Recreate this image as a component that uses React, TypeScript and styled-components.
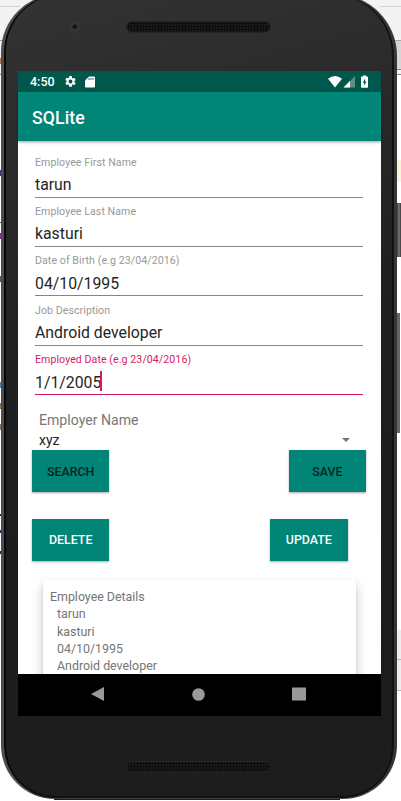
import React from 'react';
import styled, { createGlobalStyle } from 'styled-components';

const GlobalStyle = createGlobalStyle`
  * { box-sizing: border-box; }
  body { margin: 0; background: #fff; font-family: Roboto, sans-serif; overflow: hidden; }
`;

const Desktop = styled.div`
  position: relative;
  width: 401px;
  height: 801px;
  overflow: hidden;
  padding-left: 1px;
  background: linear-gradient(#f3f3f3, #f3f3f3) 0 0 / 401px 74px no-repeat, #fff;
`;

/* Sliver of desktop windows that shows past the edges of the device. */
const Mark = styled.span<{ $x: number; $y: number; $w: number; $h: number; $c: string }>`
  position: absolute;
  left: ${(p) => p.$x}px;
  top: ${(p) => p.$y}px;
  width: ${(p) => p.$w}px;
  height: ${(p) => p.$h}px;
  background: ${(p) => p.$c};
`;

const Phone = styled.div`
  position: relative;
  width: 396px;
  height: 805px;
  margin-top: -6px;
  padding: 0 12px 0 13px;
  display: flex;
  flex-direction: column;
  border-radius: 58px 62px 54px 54px;
  background: linear-gradient(165deg, #333 0%, #2a2a2a 20%, #1e1e1e 48%, #1c1c1c 100%);
  border: 1px solid #444;
  border-left: 3px solid #4b4d4e;
  border-right: 3px solid #363636;
  box-shadow: inset 2px 0 0 #080808, inset -2px 0 0 #111, inset 0 -2px 0 #101010;
`;

const Bezel = styled.div<{ $h: number; $pad: number }>`
  position: relative;
  height: ${(p) => p.$h}px;
  padding-top: ${(p) => p.$pad}px;
  display: flex;
  justify-content: center;
  flex: none;
`;

const Speaker = styled.div`
  width: 145px;
  height: 12px;
  margin-left: -2px;
  border-radius: 6px;
  border: 1px solid #252525;
  background: radial-gradient(circle, #090909 0.8px, #1a1a1a 1.3px) 0 0 / 3px 3px;
`;

const Camera = styled.span`
  position: absolute;
  left: 51px;
  top: 26px;
  width: 12px;
  height: 12px;
  border-radius: 50%;
  border: 1px solid #353637;
  background: radial-gradient(circle at 58% 48%, #161616 0 2px, #3a3c3f 3px, #303030 5px);
`;

const Screen = styled.main`
  width: 363px;
  height: 645px;
  margin-left: 1px;
  flex: none;
  display: flex;
  flex-direction: column;
  background: #fff;
`;

const StatusBar = styled.div`
  height: 21px;
  flex: none;
  display: flex;
  align-items: center;
  padding: 0 12px;
  background: #00574b;
  color: #fff;
`;

const Clock = styled.span`
  width: 34px;
  font-size: 12.5px;
  font-weight: 500;
  line-height: 21px;
`;

const StatusGroup = styled.div<{ $right?: boolean }>`
  display: flex;
  align-items: center;
  gap: 8px;
  margin-left: ${(p) => (p.$right ? 'auto' : '0')};
`;

const AppBar = styled.header`
  height: 49px;
  flex: none;
  padding: 2px 14px 0;
  display: flex;
  align-items: center;
  background: #008577;
  color: #fff;
  font-size: 17.6px;
  font-weight: 500;
  letter-spacing: 0.15px;
  z-index: 1;
  box-shadow: 0 1px 3px rgba(0, 0, 0, 0.4);
`;

const Content = styled.div`
  height: 532.5px;
  flex: none;
  overflow: hidden;
  padding: 9px 14px 0;
`;

const Form = styled.form`
  padding: 0 4px 0 3px;
`;

const Field = styled.label<{ $active?: boolean }>`
  display: flex;
  flex-direction: column;
  height: 49.4px;
  padding-top: 5.6px;
  color: ${(p) => (p.$active ? '#d81b60' : '#999')};
`;

const FieldLabel = styled.span`
  font-size: 10.6px;
  line-height: 13px;
  letter-spacing: 0.07px;
`;

const FieldValue = styled.span<{ $active?: boolean }>`
  display: flex;
  align-items: center;
  height: 29px;
  padding-top: 4px;
  font-size: 15.8px;
  color: #252525;
  border-bottom: ${(p) => (p.$active ? '1.5px solid #d81b60' : '1px solid #858585')};
`;

const Caret = styled.i`
  width: 1.5px;
  height: 20px;
  margin: -3px 0 0 -1px;
  background: #d81b60;
`;

const Employer = styled.section`
  height: 53px;
  padding: 14px 17.5px 0 7px;
`;

const EmployerTitle = styled.div`
  height: 20px;
  line-height: 18px;
  font-size: 14.1px;
  color: #777;
`;

const Select = styled.div`
  display: flex;
  justify-content: space-between;
  align-items: center;
  height: 18px;
  line-height: 18px;
  font-size: 14px;
  color: #222;
`;

const Arrow = styled.i`
  border-left: 4.5px solid transparent;
  border-right: 4.5px solid transparent;
  border-top: 4.5px solid #777;
`;

const ButtonRow = styled.div<{ $inset?: number }>`
  height: 68.6px;
  display: flex;
  justify-content: space-between;
  padding-right: ${(p) => p.$inset ?? 0}px;
`;

const Button = styled.button<{ $light?: boolean }>`
  width: 77.4px;
  height: 42.3px;
  padding: 0;
  border: 0;
  background: #008577;
  color: ${(p) => (p.$light ? '#fff' : '#0b241f')};
  font: 500 12.4px Roboto, sans-serif;
  box-shadow: 0 1px 2px rgba(0, 0, 0, 0.35);
`;

const Card = styled.section`
  width: 313.5px;
  height: 180px;
  margin: -7.2px 0 0 10.5px;
  padding: 8.4px 7.5px;
  background: #fff;
  color: #757575;
  font-size: 12.4px;
  line-height: 17.1px;
  box-shadow: 0 6px 10px rgba(0, 0, 0, 0.24), 0 1px 2px rgba(0, 0, 0, 0.08);
`;

const Detail = styled.div`
  padding-left: 7px;
`;

const NavBar = styled.nav`
  height: 42.5px;
  flex: none;
  display: flex;
  align-items: center;
  justify-content: space-between;
  padding: 0 75px 1px 72px;
  background: #000;
`;

const fields = [
  ['Employee First Name', 'tarun'],
  ['Employee Last Name', 'kasturi'],
  ['Date of Birth (e.g 23/04/2016)', '04/10/1995'],
  ['Job Description', 'Android developer'],
  ['Employed Date (e.g 23/04/2016)', '1/1/2005'],
];

const marks: [number, number, number, number, string][] = [
  [0, 6, 20, 1, '#d2d2d2'],
  [380, 6, 21, 1, '#d2d2d2'],
  [395, 40, 6, 30, '#d6d6d6'],
  [395, 40, 6, 1, '#a5a5a5'],
  [395, 69, 6, 1, '#888'],
  [395, 74, 6, 1, '#888'],
  [0, 40, 2, 1, '#999'],
  [0, 58, 1, 6, '#b17459'],
  [0, 74, 2, 1, '#888'],
  [0, 170, 1, 6, '#383875'],
  [0, 222, 1, 1, '#555'],
  [0, 233, 1, 6, '#7d397e'],
  [0, 276, 1, 6, '#555'],
  [0, 382, 1, 6, '#5288b4'],
  [0, 403, 1, 6, '#977451'],
  [0, 424, 1, 6, '#977451'],
  [0, 514, 1, 2, '#25255d'],
  [0, 530, 1, 3, '#25255d'],
  [0, 551, 1, 3, '#25255d'],
  [397, 160, 4, 22, '#fbf5d8'],
  [396, 630, 5, 60, '#eeecec'],
  [396, 659, 5, 1, '#b5b5b5'],
  [396, 690, 5, 1, '#b5b5b5'],
  [54, 798, 286, 2, '#1b1919'],
  [397, 203, 4, 54, '#494949'],
  [398, 203, 2, 54, '#6b6b6b'],
  [397, 313, 3, 120, '#666'],
];

export default function App() {
  return (
    <Desktop>
      <GlobalStyle />
      {marks.map(([x, y, w, h, c], i) => (
        <Mark key={i} $x={x} $y={y} $w={w} $h={h} $c={c} />
      ))}
      <Phone>
        <Bezel $h={76} $pad={26}>
          <Camera />
          <Speaker />
        </Bezel>
        <Screen>
          <StatusBar>
            <Clock>4:50</Clock>
            <StatusGroup>
              <svg width="13" height="13" viewBox="0 0 24 24" fill="#fff">
                <path d="M19.14 12.94a7 7 0 0 0 0-1.88l2.03-1.58a.5.5 0 0 0 .12-.61l-1.92-3.32a.5.5 0 0 0-.59-.22l-2.39.96a7 7 0 0 0-1.62-.94L14.4 2.81A.5.5 0 0 0 13.93 2h-3.84a.5.5 0 0 0-.49.41l-.36 2.54a7 7 0 0 0-1.62.94l-2.39-.96a.5.5 0 0 0-.59.22L2.72 8.47a.5.5 0 0 0 .12.61l2.03 1.58a7 7 0 0 0 0 2.28l-2.03 1.58a.5.5 0 0 0-.12.61l1.92 3.32c.13.22.37.3.59.22l2.39-.96c.5.38 1.04.7 1.62.94l.36 2.54c.04.24.24.41.49.41h3.84c.24 0 .44-.17.47-.41l.36-2.54a7 7 0 0 0 1.62-.94l2.39.96c.22.08.47 0 .59-.22l1.92-3.32a.5.5 0 0 0-.12-.61zM12 15.6a3.6 3.6 0 1 1 0-7.2 3.6 3.6 0 0 1 0 7.2z" />
              </svg>
              <svg width="10" height="12" viewBox="0 0 10 12">
                <path d="M4 .5h5q1 0 1 1v9q0 1-1 1H1q-1 0-1-1v-6z" fill="#fff" />
                <path d="M4 2v2M6 2v2M8 2v2" stroke="#00574b" strokeWidth=".8" />
              </svg>
            </StatusGroup>
            <StatusGroup $right>
              <svg width="41" height="14" viewBox="0 0 41 14" fill="#fff">
                <path d="M0 3.8Q7-1.7 14 3.8L7 12.5z" />
                <path d="M27 1V12.5H15.5z" opacity=".35" />
                <path d="M22 6V12.5h-6.5z" />
                <path d="M35 1.5V.5h3v1h1.5q.5 0 .5.5v10q0 .8-.8.8h-5.4q-.8 0-.8-.8V2q0-.5.5-.5z" />
                <path d="M37.2 3.5L34.7 7.7h1.5v3l2.3-4.1H37z" fill="#00574b" />
              </svg>
            </StatusGroup>
          </StatusBar>
          <AppBar>SQLite</AppBar>
          <Content>
            <Form>
              {fields.map(([label, value], i) => (
                <Field key={label} $active={i === 4}>
                  <FieldLabel>{label}</FieldLabel>
                  <FieldValue $active={i === 4}>
                    {value}
                    {i === 4 && <Caret />}
                  </FieldValue>
                </Field>
              ))}
            </Form>
            <Employer>
              <EmployerTitle>Employer Name</EmployerTitle>
              <Select>
                xyz
                <Arrow />
              </Select>
            </Employer>
            <ButtonRow $inset={1}>
              <Button>SEARCH</Button>
              <Button>SAVE</Button>
            </ButtonRow>
            <ButtonRow $inset={19.5}>
              <Button $light>DELETE</Button>
              <Button $light>UPDATE</Button>
            </ButtonRow>
            <Card>
              <div>Employee Details</div>
              <Detail>tarun</Detail>
              <Detail>kasturi</Detail>
              <Detail>04/10/1995</Detail>
              <Detail>Android developer</Detail>
            </Card>
          </Content>
          <NavBar>
            <svg width="14" height="16" viewBox="0 0 14 16">
              <path d="M14 1v14L1 8z" fill="#999" />
            </svg>
            <svg width="13" height="13" viewBox="0 0 13 13">
              <circle cx="6.5" cy="6.5" r="6.3" fill="#999" />
            </svg>
            <svg width="14" height="14" viewBox="0 0 14 14">
              <rect y=".5" width="14" height="13" rx=".5" fill="#999" />
            </svg>
          </NavBar>
        </Screen>
        <Bezel $h={80} $pad={45}>
          <Speaker />
        </Bezel>
      </Phone>
    </Desktop>
  );
}
